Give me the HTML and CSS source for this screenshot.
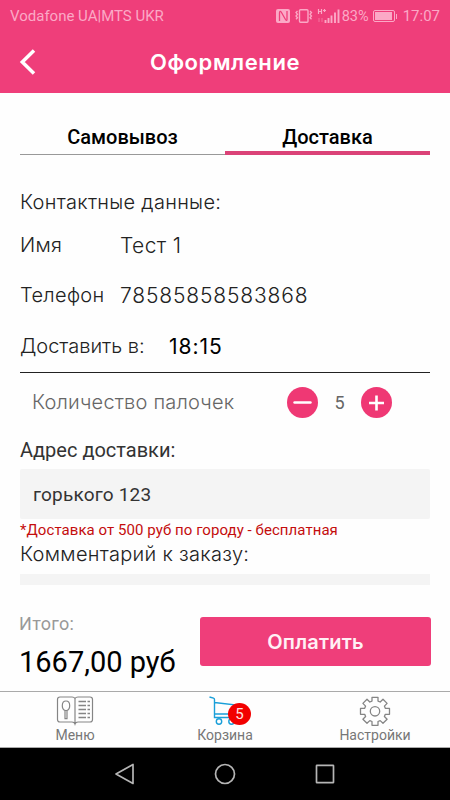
FILE: index.html
```
<!DOCTYPE html>
<html lang="ru">
<head>
    <meta charset="UTF-8">
    <meta name="viewport" content="width=device-width, initial-scale=1.0">
    <title>Оформление</title>
    <link rel="stylesheet" href="styles.css">
</head>
<body>
    <header class="header">
        <div class="status-bar">
            <span class="carrier">Vodafone UA|MTS UKR</span>
            <div class="status-icons">
                <svg class="status-svg" width="64" height="16" viewBox="0 0 64 16">
                    <!-- NFC -->
                    <rect x="0" y="1" width="14" height="14" rx="2" fill="currentColor"/>
                    <path d="M3.500 13V5c0-2 1-2 2-.5l4 7c1 1.500 1.500 1 1.500 0V3" fill="none" stroke="#ef3e7a" stroke-width="1.300"/>
                    <!-- вибрация -->
                    <rect x="23.500" y="1.700" width="8.500" height="12.600" rx="1" fill="none" stroke="currentColor" stroke-width="1.400"/>
                    <path d="M21.500 3l-1.500 1.600 1.500 1.700-1.500 1.700 1.500 1.700-1.500 1.600M34 3l1.500 1.600L34 6.300l1.500 1.700L34 9.700l1.500 1.600" fill="none" stroke="currentColor" stroke-width="1.300"/>
                    <!-- сигнал -->
                    <path d="M42.500 1v5M45.500 1v5M42.500 3.500h3M47 2.500h3M48.500 1v3" fill="none" stroke="currentColor" stroke-width="1.200"/>
                    <path d="M43 10v4M46 10v4" fill="none" stroke="currentColor" stroke-width="1" opacity="0.5"/>
                    <path d="M49.500 12V15M52.500 10V15M55.500 7.500V15M59 4.500V15M62.500 1.500V15" fill="none" stroke="currentColor" stroke-width="1.900"/>
                </svg>
                <span class="battery-text">83%</span>
                <span class="battery"><span class="battery-level"></span></span>
                <span class="battery-tip"></span>
                <span class="time">17:07</span>
            </div>
        </div>
        <div class="title-bar">
            <a href="#" class="back-btn">
                <svg width="18" height="28" viewBox="0 0 18 28">
                    <path d="M15 2.500L3.300 14 15 25.500" fill="none" stroke="currentColor" stroke-width="3.500"/>
                </svg>
            </a>
            <h1>Оформление</h1>
        </div>
    </header>

    <main class="content">
        <div class="tabs">
            <a href="#" class="tab">Самовывоз</a>
            <a href="#" class="tab active">Доставка</a>
        </div>
        <h2 class="label contacts">Контактные данные:</h2>
        <div class="row">
            <span class="label name-label">Имя</span>
            <span class="value name">Тест 1</span>
        </div>
        <div class="row">
            <span class="label phone-label">Телефон</span>
            <span class="value phone">78585858583868</span>
        </div>
        <div class="row time-row">
            <span class="label time-label">Доставить в:</span>
            <span class="value delivery-time">18:15</span>
        </div>
        <div class="sticks">
            <span class="sticks-label">Количество палочек</span>
            <button class="round-btn">
                <svg width="31" height="31" viewBox="0 0 31 31"><path d="M7.500 15.500h16" stroke="currentColor" stroke-width="2.400" stroke-linecap="round"/></svg>
            </button>
            <span class="count">5</span>
            <button class="round-btn">
                <svg width="31" height="31" viewBox="0 0 31 31"><path d="M8 16h15M15.500 8.500v15" stroke="currentColor" stroke-width="2.600"/></svg>
            </button>
        </div>
        <div class="address-label">Адрес доставки:</div>
        <div class="field">горького 123</div>
        <div class="note">*Доставка от 500 руб по городу - бесплатная</div>
        <div class="label comment-label">Комментарий к заказу:</div>
        <div class="field-cut"></div>
    </main>

    <section class="total">
        <div class="total-info">
            <div class="total-label">Итого:</div>
            <div class="total-sum">1667,00 руб</div>
        </div>
        <button class="pay-btn">Оплатить</button>
    </section>

    <nav class="tab-bar">
        <a href="#" class="nav-item">
            <svg width="38" height="30" viewBox="0 0 38 30" fill="none" stroke="#858585" stroke-width="1.200">
                <path d="M19 2.500c-.6-1-1.500-1.500-3-1.500H4C2.300 1 1.500 2 1.500 3.500v20C1.500 25.200 2.500 26 4 26h12c1.500 0 2.500.500 3 2 .500-1.500 1.500-2 3-2h12c1.500 0 2.500-.8 2.500-2.500v-20C36.500 2 35.700 1 34 1H22c-1.500 0-2.400.500-3 1.500zM19 2.500V28"/>
                <path d="M9.400 14.500c-2-.6-3.100-2.300-3.100-4.800C6.300 6.700 8 5 10 5s3.700 1.700 3.700 4.700c0 2.500-1.100 4.200-3.100 4.800zM9 14.500v8.200h2v-8.200"/>
                <path d="M22.500 5.500H30M31.500 5.500h2.500M22.500 9.500H30M31.500 9.500h2.500M22.500 13.500H30M31.500 13.500h2.500M22.500 17.500H30M31.500 17.500h2.500M22.500 21.500H30M31.500 21.500h2.500" stroke-width="1.400"/>
            </svg>
            <span>Меню</span>
        </a>
        <a href="#" class="nav-item">
            <svg width="38" height="30" viewBox="0 0 38 30" fill="none" stroke="#1a9fd9" stroke-width="1.400">
                <path d="M3.500 1l4 1.200c.8.300 1 .8 1 1.600v17.700H29M8.500 6.500l22 2.500-2.500 9H8.500"/>
                <circle cx="13" cy="25.500" r="2.700"/>
                <circle cx="25.500" cy="25.500" r="2.700"/>
            </svg>
            <span class="badge">5</span>
            <span>Корзина</span>
        </a>
        <a href="#" class="nav-item">
            <svg width="38" height="30" viewBox="-19 -15.300 38 30" fill="none" stroke="#858585" stroke-width="1.300">
                <path d="M-3-14H3V-10.200L5.200-9.300 8-12 12.100-7.900 9.400-5.200 10.300-3H14.500V3H10.300L9.400 5.200 12.100 7.900 8 12 5.200 9.300 3 10.200V14H-3V10.200L-5.200 9.300-8 12-12.100 7.900-9.400 5.200-10.300 3H-14.500V-3H-10.300L-9.400-5.200-12.100-7.900-8-12-5.200-9.300-3-10.200z" stroke-linejoin="round"/>
                <circle r="4.700"/>
            </svg>
            <span>Настройки</span>
        </a>
    </nav>

    <footer class="system-nav">
        <svg width="20" height="22" viewBox="0 0 20 22"><path d="M18 1.500v19L1 11z"/></svg>
        <svg width="22" height="22" viewBox="0 0 22 22"><circle cx="11" cy="11" r="9.500"/></svg>
        <svg width="20" height="22" viewBox="0 0 20 22"><rect x="1.500" y="2.300" width="17" height="17.400" rx="0.500"/></svg>
    </footer>
</body>
</html>
```

FILE: styles.css
```
* {
    margin: 0;
    padding: 0;
    box-sizing: border-box;
}
body {
    display: flex;
    flex-direction: column;
    width: 450px;
    height: 800px;
    background: #fefefe;
    font-family: Roboto, "Liberation Sans", sans-serif;
    overflow: hidden;
}
a {
    color: inherit;
    text-decoration: none;
}
button {
    border: none;
    font-family: inherit;
    cursor: pointer;
}
.header {
    height: 93px;
    background: #ef3e7a;
    color: white;
}
.status-bar {
    display: flex;
    justify-content: space-between;
    align-items: center;
    height: 31px;
    padding: 1px 10px 0;
    color: #fba9c6;
    font-size: 15px;
}
.carrier {
    font-size: 15px;
}
.status-icons {
    display: flex;
    align-items: center;
}
.status-svg {
    margin-right: 2px;
}
.battery-text {
    width: 28px;
    font-size: 14.500px;
}
.battery {
    width: 22px;
    height: 12px;
    margin-left: 3px;
    padding: 1px;
    border: 1px solid #fba9c6;
    border-radius: 2px;
}
.battery-level {
    display: block;
    width: 17px;
    height: 8px;
    background: #fba9c6;
}
.battery-tip {
    width: 1px;
    height: 5px;
    margin: 0 6px 0 1px;
    background: #fba9c6;
}
.time {
    font-size: 15px;
}
.title-bar {
    display: grid;
    grid-template-columns: 50px 1fr 50px;
    align-items: center;
    height: 62px;
}
.back-btn {
    display: flex;
    padding-left: 19px;
}
.title-bar h1 {
    font-family: Inter, sans-serif;
    font-size: 22px;
    font-weight: 600;
    letter-spacing: 0.6px;
    text-align: center;
}
.content {
    height: 492px;
    padding: 27px 20px 0;
    overflow: hidden;
}
.tabs {
    display: flex;
    height: 35px;
}
.tab {
    flex: 1;
    height: 35px;
    border-bottom: 1px solid #999;
    color: #000;
    font-size: 20px;
    font-weight: 500;
    line-height: 34px;
    text-align: center;
}
.tab.active {
    border-bottom: 4px solid #db4378;
}
.label {
    color: #222;
    font-family: Inter, sans-serif;
    font-size: 20px;
    font-weight: 300;
    letter-spacing: 0.3px;
    white-space: nowrap;
}
.contacts {
    height: 65px;
    padding-top: 32px;
    line-height: 30px;
}
.row {
    display: flex;
    align-items: center;
    height: 50px;
}
.name-label,
.phone-label {
    width: 100px;
}
.time-label {
    width: 149px;
    letter-spacing: 0;
}
.value {
    color: #222;
    font-family: Inter, sans-serif;
    font-size: 21px;
    font-weight: 300;
    letter-spacing: 0.4px;
}
.phone {
    letter-spacing: 0.85px;
}
.time-row {
    height: 53px;
    border-bottom: 1px solid #222;
}
.delivery-time {
    color: #000;
    font-weight: 400;
    letter-spacing: 1px;
}
.sticks {
    display: flex;
    align-items: center;
    height: 58px;
    padding-left: 12px;
}
.sticks-label {
    width: 255px;
    color: #666;
    font-family: Inter, sans-serif;
    font-size: 20px;
    font-weight: 300;
    letter-spacing: 0.2px;
    white-space: nowrap;
}
.round-btn {
    width: 31px;
    height: 31px;
    border-radius: 50%;
    background: #ef3874;
    color: white;
}
.round-btn svg {
    display: block;
}
.count {
    width: 43px;
    color: #666;
    font-size: 18px;
    text-align: center;
}
.address-label {
    height: 38px;
    color: #333;
    font-size: 20px;
    line-height: 39px;
}
.field {
    height: 50px;
    padding-left: 13px;
    background: #f4f4f4;
    border-radius: 2px;
    color: #333;
    font-size: 19px;
    letter-spacing: 0.2px;
    line-height: 51px;
}
.note {
    height: 22px;
    color: #c40d0d;
    font-size: 15px;
    letter-spacing: 0.06px;
    line-height: 23px;
}
.comment-label {
    height: 33px;
    line-height: 27px;
}
.field-cut {
    height: 11px;
    background: #f4f4f4;
}
.total {
    display: flex;
    justify-content: space-between;
    height: 106px;
    padding: 27px 19px 0;
}
.total-label {
    color: #999;
    font-size: 18px;
    letter-spacing: 0.3px;
    line-height: 23px;
}
.total-sum {
    color: #000;
    font-size: 29px;
    line-height: 54px;
    white-space: nowrap;
}
.pay-btn {
    width: 231px;
    height: 49px;
    margin-top: 5px;
    border-radius: 3px;
    background: #ef3e7a;
    color: #fff0f5;
    font-family: Inter, sans-serif;
    font-size: 20px;
    font-weight: 600;
    letter-spacing: 0.2px;
}
.tab-bar {
    display: flex;
    height: 57px;
    border-top: 1px solid #aaa;
    border-bottom: 1px solid #aaa;
}
.nav-item {
    position: relative;
    display: flex;
    flex: 1;
    flex-direction: column;
    align-items: center;
    padding-top: 4px;
    color: #777;
    font-size: 14px;
    line-height: 18px;
}
.badge {
    position: absolute;
    top: 11px;
    left: 78px;
    width: 23px;
    height: 22px;
    border-radius: 50%;
    background: #f20000;
    color: #ffe0e0;
    font-size: 15px;
    line-height: 22px;
    text-align: center;
}
.system-nav {
    display: flex;
    justify-content: center;
    align-items: center;
    gap: 79px;
    height: 52px;
    background: #000;
}
.system-nav svg {
    fill: none;
    stroke: #b5b5b5;
    stroke-width: 1.700;
    stroke-linejoin: round;
}
```
